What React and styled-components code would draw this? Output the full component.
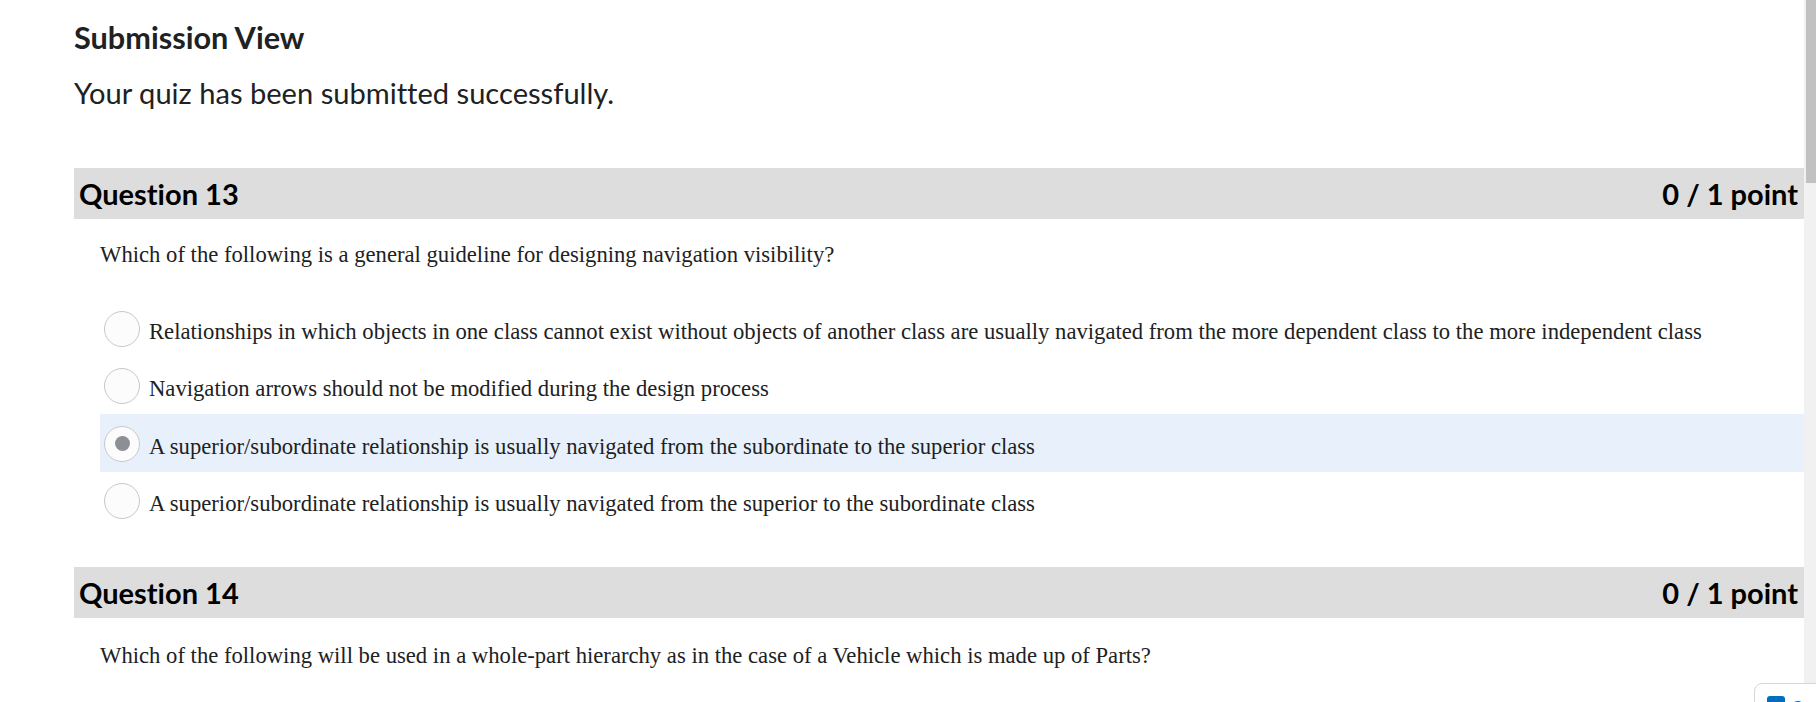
import React from "react";
import styled, { createGlobalStyle } from "styled-components";

const GlobalStyle = createGlobalStyle`
  body {
    margin: 0;
    background: #ffffff;
    font-family: Lato, "Liberation Sans", sans-serif;
    color: #202122;
    font-variant-ligatures: none;
  }
`;

const Page = styled.main`
  padding: 18px 0 0 74px;
  margin-right: 12px;
  min-height: 2700px;
  box-sizing: border-box;
`;

const Title = styled.h1`
  margin: 0;
  font-size: 30.67px;
  line-height: 40px;
  font-weight: 700;
  color: #202122;
`;

const Notice = styled.p`
  margin: 17px 0 0;
  font-size: 29.1px;
  line-height: 36px;
  font-weight: 400;
  color: #202122;
`;

const Question = styled.section`
  margin-top: ${(p) => p.$top}px;
`;

const QuestionHeader = styled.header`
  display: flex;
  justify-content: space-between;
  align-items: center;
  height: 51px;
  padding: 0 6px 0 5px;
  background: #dddddd;
  color: #000000;
  font-size: 29px;
  font-weight: 700;
`;

const QuestionBody = styled.div`
  padding-left: 26px;
`;

const Prompt = styled.p`
  margin: 0;
  padding: ${(p) => p.$pad}px 0 0;
  font-family: "Liberation Serif", "Times New Roman", serif;
  font-size: 22.67px;
  line-height: 28px;
  color: #202122;
`;

const Options = styled.ul`
  list-style: none;
  margin: 30px 0 0;
  padding: 0;
`;

const Option = styled.li`
  display: flex;
  align-items: center;
  height: 57.5px;
  gap: 9px;
  padding-left: 4px;
  background: ${(p) => (p.$selected ? "#e8f1fb" : "transparent")};
  font-family: "Liberation Serif", "Times New Roman", serif;
  font-size: 22.67px;
  color: #202122;
`;

const OptionLabel = styled.span`
  padding-top: 8px;
`;

const Radio = styled.span`
  flex: none;
  width: 36px;
  height: 36px;
  margin-top: 2px;
  border-radius: 50%;
  border: 1px solid #c8c8c8;
  background: #fcfcfd;
  display: flex;
  align-items: center;
  justify-content: center;
  box-sizing: border-box;

  &::after {
    content: "";
    display: ${(p) => (p.$checked ? "block" : "none")};
    width: 15px;
    height: 15px;
    border-radius: 50%;
    background: #8c8f94;
  }
`;

const ScrollTrack = styled.div`
  position: fixed;
  top: 0;
  right: 0;
  width: 12px;
  height: 100vh;
  background: #f1f1f1;
  z-index: 1;
`;

const ScrollThumb = styled.div`
  margin-left: 2px;
  width: 10px;
  height: 183px;
  background: #c1c1c1;
`;

const FloatButton = styled.div`
  position: fixed;
  left: 1754px;
  top: 683px;
  width: 80px;
  height: 40px;
  border: 1px solid #d4d6d9;
  border-radius: 8px;
  background: #ffffff;
  display: flex;
  align-items: flex-start;
  gap: 6px;
  padding: 12px 0 0 12px;
  box-sizing: border-box;
  font-size: 16px;
  color: #006fbf;
  z-index: 2;
`;

const FloatIcon = styled.span`
  width: 18px;
  height: 18px;
  border-radius: 3px;
  background: #006fbf;
`;

const questions = [
  {
    id: 13,
    top: 57,
    pad: 22,
    score: "0 / 1 point",
    prompt: "Which of the following is a general guideline for designing navigation visibility?",
    options: [
      "Relationships in which objects in one class cannot exist without objects of another class are usually navigated from the more dependent class to the more independent class",
      "Navigation arrows should not be modified during the design process",
      "A superior/subordinate relationship is usually navigated from the subordinate to the superior class",
      "A superior/subordinate relationship is usually navigated from the superior to the subordinate class",
    ],
    selected: 2,
  },
  {
    id: 14,
    top: 38,
    pad: 24,
    score: "0 / 1 point",
    prompt: "Which of the following will be used in a whole-part hierarchy as in the case of a Vehicle which is made up of Parts?",
    options: ["Aggregation", "Composition", "Generalization", "Association"],
    selected: 1,
  },
];

export default function App() {
  return (
    <>
      <GlobalStyle />
      <Page>
        <Title>Submission View</Title>
        <Notice>Your quiz has been submitted successfully.</Notice>
        {questions.map((q) => (
          <Question key={q.id} $top={q.top}>
            <QuestionHeader>
              <span>Question {q.id}</span>
              <span>{q.score}</span>
            </QuestionHeader>
            <QuestionBody>
              <Prompt $pad={q.pad}>{q.prompt}</Prompt>
              <Options>
                {q.options.map((o, i) => (
                  <Option key={i} $selected={i === q.selected}>
                    <Radio $checked={i === q.selected} />
                    <OptionLabel>{o}</OptionLabel>
                  </Option>
                ))}
              </Options>
            </QuestionBody>
          </Question>
        ))}
      </Page>
      <ScrollTrack>
        <ScrollThumb />
      </ScrollTrack>
      <FloatButton>
        <FloatIcon />
        <span>Go</span>
      </FloatButton>
    </>
  );
}
